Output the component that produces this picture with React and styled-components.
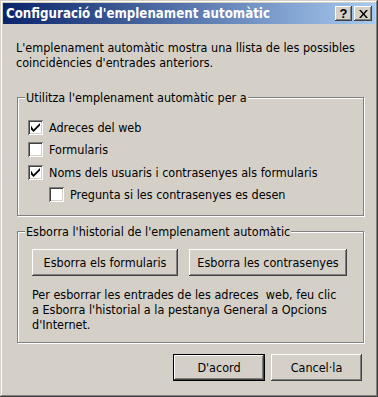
import React from "react";
import styled, { createGlobalStyle } from "styled-components";

const Global = createGlobalStyle`
  html, body {
    margin: 0;
    padding: 0;
    background: #d4d0c8;
  }
  * {
    box-sizing: border-box;
  }
`;

const face = "#d4d0c8";
const font = `"DejaVu Sans Condensed", "DejaVu Sans", sans-serif`;

const Window = styled.div`
  width: 378px;
  height: 397px;
  background: ${face};
  padding: 3px;
  box-shadow: inset -1px -1px #404040, inset 1px 1px ${face},
    inset -2px -2px #808080, inset 2px 2px #fff;
  font-family: ${font};
  font-size: 12.5px;
  color: #000;
  display: flex;
  flex-direction: column;
`;

const TitleBar = styled.div`
  height: 21px;
  display: flex;
  align-items: center;
  justify-content: space-between;
  padding: 0 3px 0 3px;
  background: linear-gradient(to right, #0a246a, #a6caf0);
`;

const Title = styled.div`
  color: #fff;
  font-weight: bold;
  font-size: 13.2px;
`;

const TitleButtons = styled.div`
  display: flex;
  gap: 2px;
`;

const CapButton = styled.div`
  width: ${(p) => p.$w || 17}px;
  height: 15px;
  background: ${face};
  box-shadow: inset -1px -1px #404040, inset 1px 1px #fff,
    inset -2px -2px #808080;
  display: flex;
  align-items: center;
  justify-content: center;
  font-weight: bold;
  font-size: 13px;
  font-family: "Liberation Sans", sans-serif;
  line-height: 1;
`;

const Content = styled.div`
  flex: 1;
  display: flex;
  flex-direction: column;
  padding: 16px 11px 0 13px;
`;

const Text = styled.p`
  margin: ${(p) => p.$margin || "0"};
  line-height: 15px;
`;

const Group = styled.fieldset`
  margin: ${(p) => p.$top}px 0 0 1px;
  padding: ${(p) => p.$pad};
  border: 1px solid #808080;
  box-shadow: 1px 1px 0 #fff, inset 1px 1px 0 #fff;
  min-width: 0;
`;

const Legend = styled.legend`
  padding: 0 1px;
  margin-left: ${(p) => p.$shift}px;
  line-height: 15px;
  background: ${face};
`;

const Row = styled.label`
  height: 22.5px;
  display: flex;
  align-items: center;
  gap: 6px;
  padding-left: ${(p) => (p.$indent ? 21 : 0)}px;
`;

const Box = styled.span`
  width: 15px;
  height: 15px;
  background: #fff;
  box-shadow: inset 1px 1px #808080, inset -1px -1px #fff,
    inset 2px 2px #404040, inset -2px -2px ${face};
  display: flex;
  align-items: center;
  justify-content: center;
  flex: none;
`;

const ButtonRow = styled.div`
  display: flex;
  gap: ${(p) => p.$gap}px;
  justify-content: ${(p) => p.$justify || "flex-start"};
`;

const Button = styled.div`
  width: ${(p) => p.$w}px;
  height: 27px;
  display: flex;
  align-items: center;
  justify-content: center;
  background: ${face};
  box-shadow: ${(p) =>
    p.$default
      ? `inset 0 0 0 1px #000, inset -2px -2px #404040, inset 2px 2px #fff, inset -3px -3px #808080`
      : `inset -1px -1px #404040, inset 1px 1px #fff, inset -2px -2px #808080`};
`;

const Footer = styled(ButtonRow)`
  margin-top: 11px;
  padding-right: 2px;
`;

function Check() {
  return (
    <svg width="9" height="9" viewBox="0 0 7 7">
      <path d="M0 2 L0 5 L2 7 L7 2 L7 0 L2 5 Z" fill="#000" />
    </svg>
  );
}

function CheckRow({ checked, indent, children }) {
  return (
    <Row $indent={indent}>
      <Box>{checked && <Check />}</Box>
      {children}
    </Row>
  );
}

export default function App() {
  return (
    <>
      <Global />
      <Window>
        <TitleBar>
          <Title>Configuració d'emplenament automàtic</Title>
          <TitleButtons>
            <CapButton>?</CapButton>
            <CapButton $w={18}>
              <svg width="9" height="8" viewBox="0 0 9 8">
                <path
                  d="M0 0h2l2.5 3 2.5-3h2L5.5 4 9 8H7L4.5 5 2 8H0l3.5-4z"
                  fill="#000"
                />
              </svg>
            </CapButton>
          </TitleButtons>
        </TitleBar>
        <Content>
          <Text>
            L'emplenament automàtic mostra una llista de les possibles
            <br />
            coincidències d'entrades anteriors.
          </Text>
          <Group $top={20} $pad="11px 10px 9px 10px">
            <Legend $shift={-3}>Utilitza l'emplenament automàtic per a</Legend>
            <CheckRow checked>Adreces del web</CheckRow>
            <CheckRow>Formularis</CheckRow>
            <CheckRow checked>Noms dels usuaris i contrasenyes als formularis</CheckRow>
            <CheckRow indent>Pregunta si les contrasenyes es desen</CheckRow>
          </Group>
          <Group $top={8} $pad="10px 10px 10px 14px">
            <Legend $shift={-7}>Esborra l'historial de l'emplenament automàtic</Legend>
            <ButtonRow $gap={11}>
              <Button $w={146}>Esborra els formularis</Button>
              <Button $w={158}>Esborra les contrasenyes</Button>
            </ButtonRow>
            <Text $margin="11px 0 0 0">
              Per esborrar les entrades de les adreces&nbsp; web, feu clic
              <br />a Esborra l'historial a la pestanya General a Opcions
              <br />
              d'Internet.
            </Text>
          </Group>
          <Footer $gap={6} $justify="flex-end">
            <Button $w={92} $default>
              D'acord
            </Button>
            <Button $w={91}>Cancel·la</Button>
          </Footer>
        </Content>
      </Window>
    </>
  );
}
